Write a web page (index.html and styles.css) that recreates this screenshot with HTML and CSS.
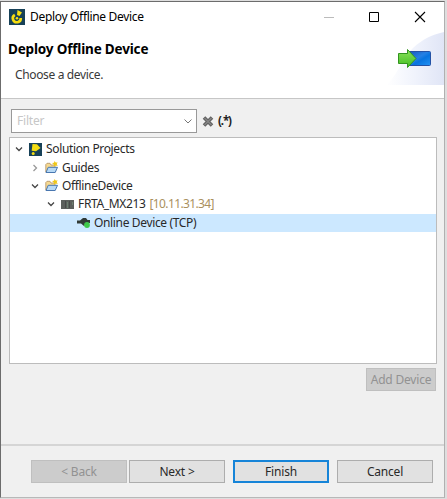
FILE: index.html
```html
<!DOCTYPE html>
<html lang="en">
<head>
<meta charset="utf-8">
<title>Deploy Offline Device</title>
<link rel="stylesheet" href="styles.css">
</head>
<body>
<main class="window">
  <header class="header">
    <div class="titlebar">
      <svg class="app-icon" width="16" height="16" viewBox="0 0 16 16"><path fill="#174158" d="M0 0h16v16H0z"/><path d="M5.800 5.800a4 4 0 1 0 6 3.200" fill="none" stroke="#f5dd10" stroke-width="2.600"/><path d="M8.500 1L13 3.500 10.500 7 8 6z" fill="#f5dd10"/><circle cx="8" cy="9.200" r="1.300" fill="#f5dd10"/></svg>
      <span class="title">Deploy Offline Device</span>
      <svg class="controls" width="104" height="14" viewBox="0 0 104 14"><path d="M0 7.500h10" stroke="#bbb"/><path d="M45.500 2.500h9v9h-9z" fill="none" stroke="#000"/><path d="M91 2l10 10M101 2L91 12" stroke="#000" stroke-width="1.100"/></svg>
    </div>
    <div class="banner">
      <div class="banner-text">
        <h1>Deploy Offline Device</h1>
        <p>Choose a device.</p>
      </div>
      <svg class="banner-art" width="58" height="53" viewBox="0 0 58 53">
        <defs>
          <linearGradient id="haze" x1="0" x2="1"><stop offset="0" stop-color="#fff"/><stop offset=".5" stop-color="#f0f3fc"/><stop offset="1" stop-color="#e0e5f6"/></linearGradient>
          <linearGradient id="blue" x1="0" y1="0" x2="1" y2="1"><stop offset="0" stop-color="#1b55b5"/><stop offset=".45" stop-color="#2580e4"/><stop offset=".6" stop-color="#0874df"/><stop offset="1" stop-color="#2292f4"/></linearGradient>
          <linearGradient id="green" x2="0" y2="1"><stop offset="0" stop-color="#8be35b"/><stop offset="1" stop-color="#42bd22"/></linearGradient>
        </defs>
        <path d="M0 53C12 44 14 28 27 16 37 7 45 3 58 0v53z" fill="url(#haze)"/>
        <rect x="21.500" y="19.500" width="23" height="14" rx="1" fill="url(#blue)" stroke="#2452a5"/>
        <path d="M12.500 21.500h9v-4l8.500 9-8.500 9v-4h-9z" fill="url(#green)" stroke="#32941f"/>
      </svg>
    </div>
  </header>
  <section class="content">
    <div class="filter-row">
      <div class="filter"><span>Filter</span><svg width="8" height="5" viewBox="0 0 8 5"><path d="M.5.5L4 4 7.500.5" fill="none" stroke="#777"/></svg></div>
      <svg class="clear" width="12" height="11" viewBox="0 0 12 11"><path d="M2 1.500l8 8M10 1.500l-8 8" stroke="#606060" stroke-width="3.600"/><path d="M2.500 2l7 7M9.500 2l-7 7" stroke="#858585" stroke-width="1.400"/></svg>
      <span class="regex">(.*)</span>
    </div>
    <div class="tree">
      <div class="row level-0"><svg class="chevron" viewBox="0 0 8 8"><path d="M1 2.500l3 3 3-3"/></svg><svg class="icon" width="13" height="13" viewBox="0 0 13 13"><path fill="#174158" d="M0 0h13v13H0z"/><path d="M3.500 1l4.500.3L11.500 5 7 8.300l-4.300-.5z" fill="#f2dc13"/><circle cx="4.200" cy="10.600" r="1.500" fill="#f2dc13"/></svg><span class="label">Solution Projects</span></div>
      <div class="row level-1"><svg class="chevron closed" viewBox="0 0 8 8"><path d="M2.500 1l3 3-3 3"/></svg><svg class="icon" width="13" height="13" viewBox="0 0 13 13"><path d="M.8 11V3.500L2 2.300h3L6 4h4v7z" fill="#f6d991" stroke="#b18f62" stroke-width=".8"/><path d="M1 11.500l2.200-5.200H12.500l-2.300 5.200z" fill="#b7d9f5" stroke="#4977b0"/><path d="M9.500 0l1.200 1.600 2-.2-1 1.700 1 2-2.200-.5-1.500 1-.2-2L7 2l2-.2z" fill="#efc817"/></svg><span class="label">Guides</span></div>
      <div class="row level-1"><svg class="chevron" viewBox="0 0 8 8"><path d="M1 2.500l3 3 3-3"/></svg><svg class="icon" width="13" height="13" viewBox="0 0 13 13"><path d="M.8 11V3.500L2 2.300h3L6 4h4v7z" fill="#f6d991" stroke="#b18f62" stroke-width=".8"/><path d="M1 11.500l2.200-5.200H12.500l-2.300 5.200z" fill="#b7d9f5" stroke="#4977b0"/><path d="M9.500 0l1.200 1.600 2-.2-1 1.700 1 2-2.200-.5-1.500 1-.2-2L7 2l2-.2z" fill="#efc817"/></svg><span class="label">OfflineDevice</span></div>
      <div class="row level-2"><svg class="chevron" viewBox="0 0 8 8"><path d="M1 2.500l3 3 3-3"/></svg><svg class="icon" width="13" height="13" viewBox="0 0 13 13"><path d="M0 2h13v9H0z" fill="#5c605d"/><path d="M4.500 3v7M8.500 3v7" stroke="#474c49"/><path d="M6.500 4v6M11.500 4v3" stroke="#6c8070"/></svg><span class="label">FRTA_MX213</span><span class="address">[10.11.31.34]</span></div>
      <div class="row level-3 selected"><svg class="icon" width="14" height="13" viewBox="0 0 14 13"><path d="M0 4.500h3l3-2.500h3l1.500 2H13v3h-2L7 10 4 7.500H0z" fill="#303a36"/><circle cx="10" cy="9" r="2.900" fill="#3ec94b"/></svg><span class="label">Online Device (TCP)</span></div>
    </div>
    <button class="button disabled add" disabled>Add Device</button>
  </section>
  <footer class="footer">
    <button class="button disabled" disabled>&lt; Back</button>
    <button class="button">Next &gt;</button>
    <button class="button primary">Finish</button>
    <button class="button">Cancel</button>
  </footer>
</main>
</body>
</html>
```

FILE: styles.css
```css
* { box-sizing: border-box; }
body { margin: 0; width: 447px; height: 499px; padding-top: 1px; overflow: hidden; background: #dedede; font: 12px/18px "Noto Sans", "Open Sans", sans-serif; color: #292929; }
.window { width: 445px; height: 497px; border: 1px solid #6c6c6c; border-right-color: #b0b0b0; border-bottom-color: #b8b8b8; background: #f0f0f0; display: flex; flex-direction: column; }
.header { height: 97px; background: #fff; border-bottom: 1px solid #c6c6c6; flex: none; }
.titlebar { height: 30px; display: flex; align-items: center; padding: 0 16px 0 8px; }
.app-icon { margin-right: 5px; flex: none; }
.title { color: #000; letter-spacing: -.32px; white-space: nowrap; }
.controls { margin-left: auto; flex: none; }
.banner { height: 66px; display: flex; justify-content: space-between; }
.banner-text { padding: 8px 0 0 7px; }
h1 { font-size: 13.5px; line-height: 19px; margin: 0; color: #000; letter-spacing: -.17px; white-space: nowrap; }
p { margin: 7px 0 0 7px; color: #393939; letter-spacing: -.36px; }
.content { height: 345px; flex: none; padding: 10px 7px 0 8px; display: flex; flex-direction: column; }
.filter-row { display: flex; align-items: center; height: 24px; padding-left: 2px; margin-bottom: 4px; }
.filter { width: 186px; height: 24px; border: 1px solid #999; background: #fff; padding: 0 5px; display: flex; align-items: center; justify-content: space-between; color: #c7c7c7; letter-spacing: -.2px; }
.filter svg { margin-right: -1px; }
.clear { margin: 0 4px 0 5px; }
.regex { font-weight: bold; font-size: 11.5px; letter-spacing: -1.1px; color: #222; }
.tree { height: 227px; border: 1px solid #bcbcbc; background: #fff; padding-top: 2px; flex: none; }
.row { height: 18.4px; display: flex; align-items: center; white-space: nowrap; }
.level-0 { padding-left: 5px; }
.level-1 { padding-left: 21px; }
.level-2 { padding-left: 37px; }
.level-3 { padding-left: 67px; }
.selected { background: #cce8ff; }
.chevron { width: 8px; height: 8px; margin-right: 6px; fill: none; stroke: #454545; stroke-width: 1.3; }
.chevron.closed { stroke: #999; }
.icon { margin-right: 4px; flex: none; }
.selected .icon { margin-right: 3px; }
.label { letter-spacing: -.35px; }
.address { color: #aa905e; margin-left: 4px; letter-spacing: -.62px; }
.button { width: 96px; height: 23px; border: 1px solid #adadad; background: #e1e1e1; font: inherit; color: #292929; padding: 0; letter-spacing: -.2px; line-height: 19px; flex: none; white-space: nowrap; }
.disabled { background: #ccc; border-color: #bfbfbf; color: #929292; }
.add { width: 70px; align-self: flex-end; margin: 4px 1px 0 0; }
.footer { flex: 1; border-top: 2px solid #d5d5d5; padding: 14px 0 0 30px; display: flex; gap: 8px; }
.footer .disabled { margin-right: -6px; }
.primary { border: 2px solid #1684d8; }
```
